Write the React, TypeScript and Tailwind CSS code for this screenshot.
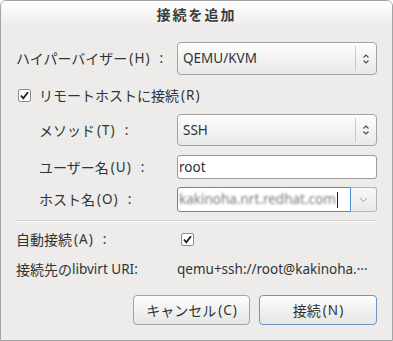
const latin = { fontFamily: '"Noto Sans", "Noto Sans CJK JP", sans-serif' };
const ja = { fontFamily: '"Noto Sans CJK JP", "Noto Sans", sans-serif', fontFeatureSettings: '"fwid"' };

function UpDown() {
  return (
    <svg width="8" height="12" viewBox="0 0 8 12" className="block">
      <path d="M1.5 4.5 L4 2 L6.5 4.5" fill="none" stroke="#4a4a4a" strokeWidth="1.1" />
      <path d="M1.5 7.5 L4 10 L6.5 7.5" fill="none" stroke="#4a4a4a" strokeWidth="1.1" />
    </svg>
  );
}

function Check() {
  return (
    <div className="w-[13px] h-[13px] bg-white border border-[#8c8c8c] rounded-[2px] flex items-center justify-center">
      <svg width="11" height="11" viewBox="0 0 11 11">
        <path d="M2 5.5 L4.3 8.3 L9 2.3" fill="none" stroke="#1e1e1e" strokeWidth="1.8" />
      </svg>
    </div>
  );
}

function Combo({ value, h }: { value: string; h: string }) {
  return (
    <div
      className={`w-[200px] ${h} flex items-center rounded-[4px] border border-[#a3a3a3] bg-gradient-to-b from-[#fdfdfd] to-[#e9e9e8] shadow-[inset_0_1px_0_#ffffff]`}
    >
      <span className="flex-1 pl-[5px] text-[#2e3436]" style={latin}>
        {value}
      </span>
      <div className="w-px self-stretch my-[3px] bg-[#c9c9c9]" />
      <div className="w-[20px] flex justify-center">
        <UpDown />
      </div>
    </div>
  );
}

function Key({ k }: { k: string }) {
  return (
    <span style={latin} className="ml-[2px] flex items-center">
      <span>(</span>
      <span className="mx-[1px]">{k}</span>
      <span>)</span>
    </span>
  );
}

function Label({ text, k, indent }: { text: string; k: string; indent?: boolean }) {
  return (
    <span className={`w-[161px] shrink-0 flex items-center ${indent ? 'pl-[23px]' : ''}`}>
      <span style={ja} className="text-[14px]">{text}</span>
      <Key k={k} />
      <span style={latin} className="ml-[10px]">:</span>
    </span>
  );
}

export default function App() {
  return (
    <div
      lang="ja"
      className="w-[393px] h-[341px] bg-[#edecea] border border-[#a4a4a4] rounded-t-[6px] overflow-hidden text-[13.5px] text-[#2e3436] flex flex-col"
      style={latin}
    >
      <div className="h-[26px] shrink-0 bg-gradient-to-b from-[#ffffff] to-[#edecea] flex items-center justify-center">
        <span className="font-bold text-[14px] tracking-[2px] text-[#3b3b3b]" style={ja}>
          接続を追加
        </span>
      </div>

      <div className="px-[15px] flex flex-col">
        <div className="mt-[15px] h-[33px] flex items-center">
          <Label text="ハイパーバイザー" k="H" />
          <Combo value="QEMU/KVM" h="h-[33px]" />
        </div>

        <div className="mt-[10px] h-[20px] flex items-center">
          <div className="ml-[2px] mr-[8px]">
            <Check />
          </div>
          <span style={ja} className="text-[14px]">リモートホストに接続</span>
          <Key k="R" />
        </div>

        <div className="mt-[9px] h-[32px] flex items-center">
          <Label text="メソッド" k="T" indent />
          <Combo value="SSH" h="h-[32px]" />
        </div>

        <div className="mt-[9px] h-[24px] flex items-center">
          <Label text="ユーザー名" k="U" indent />
          <div className="w-[200px] h-[24px] bg-white border border-[#9a9a9a] rounded-[3px] flex items-center pl-[1px]">
            root
          </div>
        </div>

        <div className="mt-[8px] h-[25px] flex items-center">
          <Label text="ホスト名" k="O" indent />
          <div className="w-[200px] h-[25px] flex">
            <div className="flex-1 min-w-0 bg-white border border-[#4a90d9] rounded-l-[3px] flex items-center pl-[1px] overflow-hidden">
              <span className="text-[#7a7a7a] blur-[1.2px] whitespace-nowrap">kakinoha.nrt.redhat.com</span>
              <span className="w-px h-[16px] shrink-0 bg-[#222] ml-[1px]" />
            </div>
            <div className="w-[26px] shrink-0 border border-l-0 border-[#b5b5b5] rounded-r-[3px] bg-gradient-to-b from-[#f7f7f7] to-[#e9e9e8] flex items-center justify-center">
              <svg width="9" height="6" viewBox="0 0 9 6">
                <path d="M1 1 L4.5 4.5 L8 1" fill="none" stroke="#a0a0a0" strokeWidth="1" />
              </svg>
            </div>
          </div>
        </div>

        <div className="mt-[8px] h-px bg-[#cfcfcd] border-b border-white box-content" />

        <div className="mt-[7px] h-[20px] flex items-center">
          <span className="w-[165px] shrink-0 flex items-center">
            <span style={ja} className="text-[14px]">自動接続</span>
            <Key k="A" />
            <span className="ml-[10px]">:</span>
          </span>
          <Check />
        </div>

        <div className="mt-[10px] h-[20px] flex items-center">
          <span className="w-[161px] shrink-0 flex items-center">
            <span style={ja} className="text-[14px]">接続先の</span>
            <span>libvirt URI:</span>
          </span>
          <span>qemu+ssh://root@kakinoha.···</span>
        </div>

        <div className="mt-[16px] flex justify-end gap-[9px]">
          <button className="w-[117px] h-[30px] rounded-[4px] border border-[#a3a3a3] bg-gradient-to-b from-[#fdfdfd] to-[#e6e6e5] text-[#2e3436] flex items-center justify-center">
            <span style={ja} className="text-[14px]">キャンセル</span>
            <Key k="C" />
          </button>
          <button className="w-[118px] h-[30px] rounded-[4px] border border-[#6f95c6] bg-gradient-to-b from-[#fdfdfd] to-[#e6e6e5] text-[#2e3436] flex items-center justify-center">
            <span style={ja} className="text-[14px]">接続</span>
            <Key k="N" />
          </button>
        </div>
      </div>
    </div>
  );
}
